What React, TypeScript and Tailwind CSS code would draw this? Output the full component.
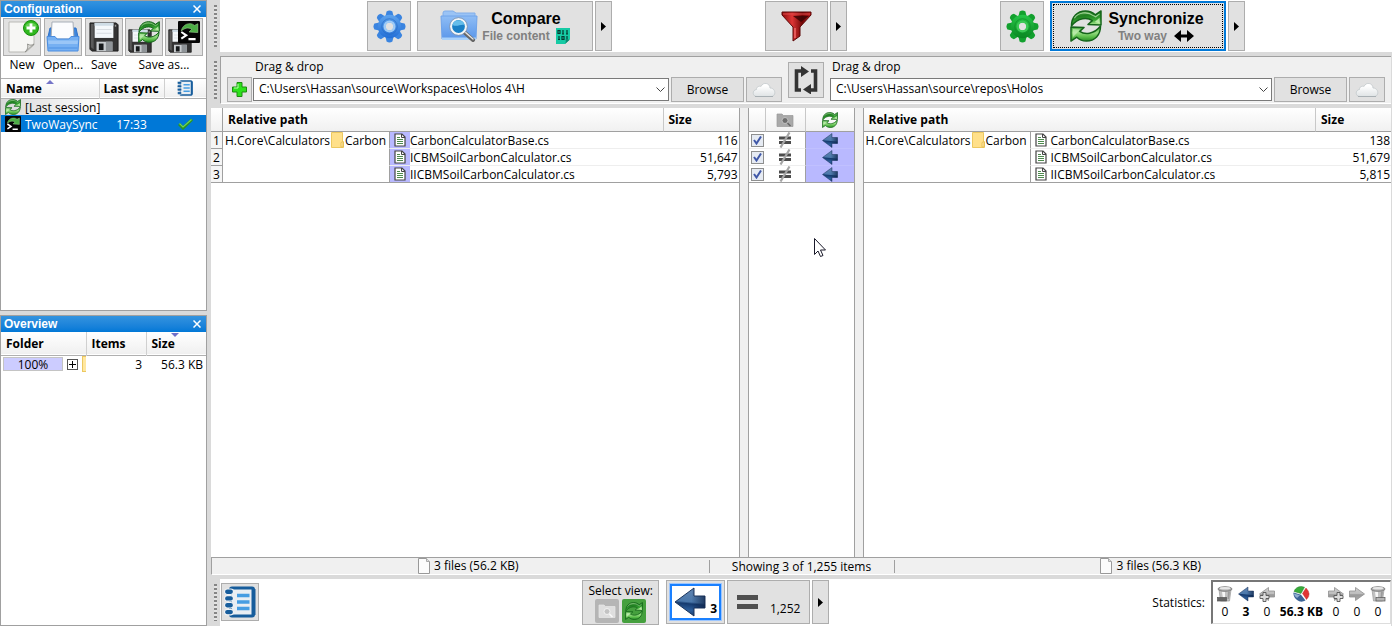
import React from "react";

type IconProps = { className?: string };

const syncHalf = "M1 16.500C1 7 7 1 15.500 1C19.500 1 23 2.500 25.500 5L31.500 1V15.500L18 15L22.500 11C17.500 7.500 8 7.500 1 16.500Z";

function SyncIcon({ className = "size-4" }: IconProps) {
  return (
    <svg className={className} viewBox="0 0 32 33" aria-hidden="true">
      <defs>
        <linearGradient id="syncTop" x1="0" y1="0" x2="0.3" y2="1">
          <stop offset="0" stopColor="#6cb85c" />
          <stop offset="0.4" stopColor="#1f7f20" />
          <stop offset="0.75" stopColor="#36a332" />
          <stop offset="1" stopColor="#9fe088" />
        </linearGradient>
        <linearGradient id="syncBottom" x1="0" y1="0" x2="0" y2="1">
          <stop offset="0" stopColor="#3da636" />
          <stop offset="0.45" stopColor="#93da80" />
          <stop offset="0.7" stopColor="#5fc04e" />
          <stop offset="1" stopColor="#278f26" />
        </linearGradient>
      </defs>
      <g strokeLinejoin="round" stroke="#14641a" strokeWidth="1.500">
        <path d={syncHalf} fill="url(#syncTop)" />
        <path
          d="M31 16.500C31 26 25 32 16.500 32C12.500 32 9 30.500 6.500 28L0.500 32V17.500L14 18L9.500 22C14.500 25.500 24 25.500 31 16.500Z"
          fill="url(#syncBottom)"
        />
      </g>
      <path d="M4 8.500C8 2.500 17 1 24 6L26 7L30 4" fill="none" stroke="#cdeec2" strokeWidth="1.100" opacity="0.7" />
      <path d="M25 12.500L30 8V14Z" fill="#c9f2b8" opacity="0.8" />
      <path d="M2.500 28V19.500L10 20Z" fill="#d2f5c4" opacity="0.6" />
    </svg>
  );
}

function CmdSyncIcon({ className = "size-4" }: IconProps) {
  return (
    <svg className={className} viewBox="0 0 20 20" aria-hidden="true">
      <rect width="20" height="20" rx="1" fill="#050505" />
      <path d="M3 9C4 3 11 0.500 15 4L18 2.500V10.500L10 10L12.500 7.500C9 5.500 6 6.500 3 9Z" fill="#4cae45" stroke="#a5dd9b" strokeWidth="0.5" />
      <path d="M3 10L7.500 13L3 16M9.500 16.500H16" fill="none" stroke="#fff" strokeWidth="1.900" />
    </svg>
  );
}

function FloppyShape() {
  return (
    <g>
      <path d="M1 1H29L31 3V31H3L1 29Z" fill="#343434" stroke="#1c1c1c" />
      <path d="M2 2H5V29L2 27Z" fill="#5a5a5a" />
      <path d="M6 1H26V17H6Z" fill="#f4f8fb" />
      <path d="M6 1H26V4H6Z" fill="#cfdde6" />
      <path d="M8 8H24M8 12H24" stroke="#d5dbe0" />
      <path d="M8 21H25V31H8Z" fill="#c9cdd0" />
      <path d="M18 21H25V31H18Z" fill="#8f9498" />
      <path d="M10.500 23H15.500V30H10.500Z" fill="#16191b" />
      <path d="M27.500 3H29V5H27.500Z" fill="#9b9b9b" />
    </g>
  );
}

function FloppyIcon() {
  return (
    <svg className="size-[30px]" viewBox="0 0 32 32" aria-hidden="true">
      <FloppyShape />
    </svg>
  );
}

function FloppyOverlay({ children }: { children: React.ReactNode }) {
  return (
    <span className="grid size-8">
      <svg className="col-start-1 row-start-1 size-6 self-end" viewBox="0 0 32 32" aria-hidden="true">
        <FloppyShape />
      </svg>
      <span className="z-10 col-start-1 row-start-1 justify-self-end">{children}</span>
    </span>
  );
}

function NewIcon() {
  return (
    <svg className="size-9" viewBox="0 0 36 36" aria-hidden="true">
      <path d="M5 3H30V26L22 33H5Z" fill="#f6f6f4" stroke="#b9b9b5" />
      <path d="M30 25L21 33C24 30 24 28 23.500 25C26 26.500 28 26.500 30 25Z" fill="#dcdcd8" stroke="#8d8d89" strokeWidth="0.9" />
      <circle cx="27" cy="9" r="7.500" fill="#2fb71e" stroke="#168c0c" />
      <path d="M21 7.500A6.500 6 0 0 1 33 7.500C29 9.500 25 9.500 21 7.500Z" fill="#78d965" opacity="0.7" />
      <path d="M27 4.500V13.500M22.500 9H31.500" stroke="#fff" strokeWidth="2.800" />
    </svg>
  );
}

function OpenIcon() {
  return (
    <svg className="size-9" viewBox="0 0 36 36" aria-hidden="true">
      <path d="M3 18L5 9H31L33 18V22H3Z" fill="#3e86dc" stroke="#2d70c8" />
      <path d="M7 3H28L29 20H6Z" fill="#fbfcfe" stroke="#a7aeb8" />
      <path d="M2 17.500H10L12 20H24L26 17.500H34L33 32H3Z" fill="#76b0f2" stroke="#4a8de0" />
      <path d="M3 21.500H33L32.500 25H3.500Z" fill="#a9d0fa" opacity="0.7" />
      <path d="M3.500 29H32.500" stroke="#4c91e4" />
    </svg>
  );
}

function LogIcon({ className = "size-4" }: IconProps) {
  return (
    <svg className={className} viewBox="0 0 32 32" aria-hidden="true">
      <rect x="6.500" y="2" width="23" height="28" rx="1.500" fill="#e9eef3" stroke="#175d9c" strokeWidth="3" />
      <path d="M29.500 3V29" stroke="#175d9c" strokeWidth="4" />
      <path d="M13 9.500H25.500M13 16H25.500M13 22.500H25.500" stroke="#469de2" strokeWidth="3.400" />
      <g fill="#175d9c" stroke="#eef1f4" strokeWidth="1.200">
        <rect x="0.500" y="3" width="9" height="5.500" rx="2.700" />
        <rect x="0.500" y="9.700" width="9" height="5.500" rx="2.700" />
        <rect x="0.500" y="16.500" width="9" height="5.500" rx="2.700" />
        <rect x="0.500" y="23.300" width="9" height="5.500" rx="2.700" />
      </g>
    </svg>
  );
}

const teeth = [0, 45, 90, 135, 180, 225, 270, 315];

function GearIcon({ color }: { color: "blue" | "green" }) {
  const blue = color === "blue";
  const id = blue ? "gearBlue" : "gearGreen";
  return (
    <svg className="size-[33px]" viewBox="0 0 34 34" aria-hidden="true">
      <defs>
        <linearGradient id={id} gradientUnits="userSpaceOnUse" x1="0" y1="0" x2="0" y2="34">
          <stop offset="0" stopColor={blue ? "#6aaef2" : "#2bd350"} />
          <stop offset="1" stopColor={blue ? "#1764d2" : "#047a1a"} />
        </linearGradient>
        <mask id={id + "Hole"}>
          <rect width="34" height="34" fill="#fff" />
          <circle cx="17" cy="17" r="4" fill="#000" />
        </mask>
      </defs>
      <g mask={"url(#" + id + "Hole)"}>
        <g fill={blue ? "#3a84e0" : "#12a02e"}>
          {teeth.map((a) => (
            <path key={a} d="M12.500 8L14 1.500Q17 -0.500 20 1.500L21.500 8Z" transform={"rotate(" + a + " 17 17)"} />
          ))}
        </g>
        <circle cx="17" cy="17" r="12" fill={"url(#" + id + ")"} />
      </g>
      <circle cx="17" cy="17" r="8" fill="none" stroke={blue ? "#2468c0" : "#0a8a22"} strokeWidth="1" opacity="0.6" />
      <circle cx="17" cy="17" r="5" fill="none" stroke={blue ? "#9fcbf6" : "#3cc956"} strokeWidth="2.500" />
    </svg>
  );
}

function CompareIcon() {
  return (
    <svg className="h-8 w-[38px]" viewBox="0 0 38 32" aria-hidden="true">
      <defs>
        <linearGradient id="folderG" x1="0" y1="0" x2="0" y2="1">
          <stop offset="0" stopColor="#8fbdf5" />
          <stop offset="1" stopColor="#5b97ea" />
        </linearGradient>
      </defs>
      <path d="M3 10V3Q3 1 5 1H13L16 3H35V10Z" fill="#9ac3f5" stroke="#80aeea" />
      <path d="M1 6H37L36 29H2Z" fill="url(#folderG)" stroke="#70a4ea" />
      <path d="M2 27.500H36V30H2Z" fill="#a9d1fa" />
      <path d="M24 22L33 30" stroke="#666" strokeWidth="4" strokeLinecap="round" />
      <path d="M25 22L33 29" stroke="#e4e4e4" strokeWidth="1.500" strokeLinecap="round" />
      <circle cx="18.500" cy="16.500" r="7.500" fill="#1a80c6" stroke="#f3f6f8" strokeWidth="2.200" />
      <circle cx="18.500" cy="16.500" r="8.900" fill="none" stroke="#8792a0" strokeWidth="0.7" />
      <path d="M12.500 15A6.200 6.200 0 0 1 24.500 15C21 13.500 17 17.500 12.500 15Z" fill="#65bdea" />
    </svg>
  );
}

function BinaryIcon() {
  return (
    <svg className="h-4 w-[14px]" viewBox="0 0 14 16" aria-hidden="true">
      <path d="M0 0H14V11L9 16H0Z" fill="#16caa4" />
      <path d="M9 16C10 14 10 13 9.500 11.500H14Z" fill="#0a8a70" />
      <path d="M2 2.500H4V5.500H2ZM7 2V6M11 2V6M6 6H8M10 6H12M3 8V11.500M2 11.500H4M6 8.500H8V11.500H6ZM11 8V11.500" fill="none" stroke="#06382f" strokeWidth="1.200" />
    </svg>
  );
}

function FunnelIcon() {
  return (
    <svg className="size-[31px]" viewBox="0 0 31 31" aria-hidden="true">
      <defs>
        <linearGradient id="funnelG" x1="0" y1="0" x2="1" y2="0">
          <stop offset="0" stopColor="#8b0a0a" />
          <stop offset="0.35" stopColor="#dd3535" />
          <stop offset="0.7" stopColor="#720606" />
          <stop offset="1" stopColor="#b51717" />
        </linearGradient>
      </defs>
      <path d="M1 1H30V4L19 16V25L12 30V16L1 4Z" fill="url(#funnelG)" stroke="#5d0909" />
      <path d="M2 3H29" stroke="#e24a4a" />
      <path d="M14 17V27" stroke="#f16a6a" strokeWidth="1.500" />
      <path d="M12 5H28L20 11Z" fill="#3c0303" opacity="0.85" />
    </svg>
  );
}

function SwapIcon() {
  return (
    <svg className="size-7" viewBox="0 0 28 28" aria-hidden="true">
      <path d="M9 5H4.500V24H9M19 5H23.500V24H18M8 5H11M17 24H20" fill="none" stroke="#333" strokeWidth="3.600" />
      <path d="M9 0L17 5.500L9 11ZM19 18L11 23.500L19 28.500Z" fill="#333" />
    </svg>
  );
}

function CloudIcon() {
  return (
    <svg className="h-4 w-6" viewBox="0 0 24 16" aria-hidden="true">
      <defs>
        <linearGradient id="cloudG" x1="0" y1="0" x2="0" y2="1">
          <stop offset="0.2" stopColor="#fff" />
          <stop offset="1" stopColor="#dfe3e5" />
        </linearGradient>
      </defs>
      <path d="M5 14.500C0 14.500 0 8 4.500 7.500C4 5 7.500 3.500 9 4.500C11 -0.500 18 1 18 6C24 6 24.500 14.500 19 14.500Z" fill="url(#cloudG)" stroke="#c3c9cc" strokeWidth="0.8" />
      <path d="M3 14.500H21" stroke="#a9b0b4" />
    </svg>
  );
}

function LeftArrow({ className = "size-4" }: IconProps) {
  return (
    <svg className={className} viewBox="0 0 32 30" aria-hidden="true">
      <defs>
        <linearGradient id="arrowBlue" x1="0.1" y1="0" x2="0" y2="1">
          <stop offset="0" stopColor="#5f83b0" />
          <stop offset="0.45" stopColor="#4b78ab" />
          <stop offset="0.52" stopColor="#163b6f" />
          <stop offset="0.75" stopColor="#2d5f9c" />
          <stop offset="1" stopColor="#163360" />
        </linearGradient>
        <linearGradient id="arrowShade" x1="0" y1="0" x2="1" y2="0">
          <stop offset="0.55" stopColor="#0f254a" stopOpacity="0" />
          <stop offset="1" stopColor="#0f254a" stopOpacity="0.75" />
        </linearGradient>
      </defs>
      <path d="M1 15L20 1V9H31V21H20V29Z" fill="url(#arrowBlue)" stroke="#1c355d" strokeLinejoin="round" />
      <path d="M1 15L20 1V9H31V21H20V29Z" fill="url(#arrowShade)" />
    </svg>
  );
}

function StatArrow({ right = false, plus = false }: { right?: boolean; plus?: boolean }) {
  return (
    <svg className="size-4" viewBox="0 0 16 16" aria-hidden="true">
      <defs>
        <linearGradient id="arrowGray" x1="0" y1="0" x2="0" y2="1">
          <stop offset="0" stopColor="#cfcfcf" />
          <stop offset="0.5" stopColor="#bdbdbd" />
          <stop offset="0.55" stopColor="#999" />
          <stop offset="1" stopColor="#ababab" />
        </linearGradient>
      </defs>
      <path
        d="M0.500 8L9.500 1.500V5H15.500V11H9.500V14.500Z"
        fill="url(#arrowGray)"
        stroke="#8f8f8f"
        strokeWidth="0.8"
        transform={right ? "matrix(-1 0 0 1 16 0)" : undefined}
      />
      {plus && (
        <path
          d="M4 6.500H7V9.500H10V12.500H7V15.500H4V12.500H1V9.500H4Z"
          fill="#ddd"
          stroke="#555"
          strokeWidth="0.9"
          transform={right ? "translate(5 0)" : undefined}
        />
      )}
    </svg>
  );
}

function TrashIcon({ right = false }: { right?: boolean }) {
  return (
    <svg className="size-4" viewBox="0 0 16 16" aria-hidden="true">
      <path d="M2 3.500H14L12.500 15H3.500Z" fill="#c2c2c2" stroke="#9b9b9b" strokeWidth="0.7" />
      <path d="M5 5.500H8L8 13H6Z" fill="#f7f7f7" />
      <path d="M11 5.500H13L12 13H10.500Z" fill="#9b9b9b" />
      <ellipse cx="8" cy="3" rx="7" ry="2.300" fill="#a8a8a8" stroke="#777" strokeWidth="0.8" />
      <ellipse cx="8" cy="2.300" rx="5.500" ry="1.200" fill="#e6e6e6" />
      <rect x={right ? 6 : 0.5} y="11.500" width="9" height="3.500" fill={right ? "#b5b5b5" : "#666"} stroke="#555" strokeWidth="0.7" />
    </svg>
  );
}

function PieIcon() {
  return (
    <svg className="h-4 w-[17px]" viewBox="0 0 17 16" aria-hidden="true">
      <path d="M8 7.500L1 5.500Q3 0.500 8.500 0.500L11.500 1.200Z" fill="#37ab3a" stroke="#237e26" strokeWidth="0.5" />
      <path d="M9.500 7.500L13 2Q19 8 13.500 13.500Z" fill="#e03434" stroke="#b11f1f" strokeWidth="0.4" />
      <path d="M0.500 6.500L8 8.700L12.500 14.500Q8 17 4 14Q0 11 0.500 6.500Z" fill="#3b6396" />
      <path d="M0.800 7.500L7 9.200L4 12Q1.500 11 0.800 7.500Z" fill="#8fadd0" />
    </svg>
  );
}

function FolderSearchIcon({ className = "h-4 w-[18px]", light = false }: IconProps & { light?: boolean }) {
  return (
    <svg className={className} viewBox="0 0 18 16" aria-hidden="true">
      <path d="M1 2H6L7.500 3.500H17V14.500H1Z" fill={light ? "#dedede" : "#a9a9a9"} stroke={light ? "#e8e8e8" : "#9a9a9a"} strokeWidth="0.7" />
      <circle cx="9" cy="8.500" r="3" fill={light ? "#c3c3c3" : "#6e6e6e"} stroke={light ? "#f5f5f5" : "#c6c6c6"} strokeWidth="0.9" />
      <path d="M11.500 11L14.500 14" stroke={light ? "#fafafa" : "#666"} strokeWidth="1.500" />
    </svg>
  );
}

function NotEqualIcon() {
  return (
    <svg className="mx-auto block size-4" viewBox="0 0 16 16" aria-hidden="true">
      <path d="M2 6H14M2 10.500H14" stroke="#4c4c4c" strokeWidth="3" />
      <path d="M3.500 15.500L12.500 0.500" stroke="#a5a5a5" strokeWidth="2.200" />
    </svg>
  );
}

function FileIcon() {
  return (
    <svg className="h-[14px] w-3" viewBox="0 0 12 14" aria-hidden="true">
      <path d="M1 1H8L11 4V13H1Z" fill="#fff" stroke="#444" strokeWidth="1.200" />
      <path d="M7.500 1V4.500H11" fill="none" stroke="#444" />
      <path d="M3 4.500H6M3 6.500H9M3 8.500H9M3 10.500H9" stroke="#4c8a4c" />
    </svg>
  );
}

function PageIcon() {
  return (
    <svg className="h-4 w-3" viewBox="0 0 12 16" aria-hidden="true">
      <path d="M0.500 0.500H8.500L11.500 3.500V15.500H0.500Z" fill="#fcfcfc" stroke="#999" />
      <path d="M8.500 0.500V3.500H11.500" fill="#e0e0e0" stroke="#aaa" />
    </svg>
  );
}

function FolderIcon() {
  return (
    <svg className="h-4 w-[13px] shrink-0" viewBox="0 0 13 16" aria-hidden="true">
      <path d="M0.500 0.500H11.500V9L12.500 10V15.500H0.500Z" fill="#ffe08a" stroke="#ecc860" />
      <path d="M10 15V10.500L12 9.500V15Z" fill="#ffeaa8" stroke="#e3ba4c" strokeWidth="0.8" />
    </svg>
  );
}

function Triangle() {
  return (
    <svg className="h-[9px] w-[5px]" viewBox="0 0 5 9" aria-hidden="true">
      <path d="M0 0L5 4.500L0 9Z" fill="#000" />
    </svg>
  );
}

const btn = "flex items-center justify-center border border-[#adadad] bg-[#e1e1e1]";
const headBg = "bg-gradient-to-b from-white to-[#f0f0f0]";
const cellText = "block h-4 leading-[18px] whitespace-nowrap";

function MenuArrow({ label, height = "h-[50px]" }: { label: string; height?: string }) {
  return (
    <button aria-label={label} className={`${btn} ${height} w-[17px]`}>
      <Triangle />
    </button>
  );
}

function Grip() {
  return (
    <div className="flex w-[9px] shrink-0 py-[5px] pl-[3px]">
      <div className="w-[3px] bg-[repeating-linear-gradient(#858585_0_2px,#e4e4e4_2px_4px)]" />
    </div>
  );
}

function PanelTitle({ children }: { children: string }) {
  return (
    <div className="flex h-4 items-center justify-between bg-gradient-to-b from-[#3393df] to-[#0078d7] pr-[5px] pl-[3px] text-white">
      <h2 className="font-['Liberation_Sans',sans-serif] text-xs font-bold">{children}</h2>
      <button aria-label={"Close " + children}>
        <svg className="size-2" viewBox="0 0 8 8" aria-hidden="true">
          <path d="M0.500 0.500L7.500 7.500M7.500 0.500L0.500 7.500" stroke="#fff" strokeWidth="1.500" />
        </svg>
      </button>
    </div>
  );
}

function ConfigButton({ label, children }: { label: string; children: React.ReactNode }) {
  return (
    <button aria-label={label} className={`${btn} size-[38px]`}>
      {children}
    </button>
  );
}

const configLabel = "leading-[18px] whitespace-nowrap";

function Sidebar() {
  return (
    <aside className="flex w-[207px] shrink-0 flex-col gap-1">
      <section className="flex h-[311px] flex-col border border-[#a0a0a0] bg-white">
        <PanelTitle>Configuration</PanelTitle>
        <div className="flex gap-[2px] border-b border-[#b0b0b0] px-[2px] pt-px pb-1">
          <div className="flex w-[38px] flex-col items-center">
            <ConfigButton label="New"><NewIcon /></ConfigButton>
            <span className={configLabel}>New</span>
          </div>
          <div className="flex w-10 flex-col items-center">
            <ConfigButton label="Open"><OpenIcon /></ConfigButton>
            <span className={configLabel}>Open...</span>
          </div>
          <div className="flex w-[38px] flex-col items-center">
            <ConfigButton label="Save"><FloppyIcon /></ConfigButton>
            <span className={configLabel}>Save</span>
          </div>
          <div className="flex flex-col items-center">
            <div className="flex gap-[2px]">
              <ConfigButton label="Save as">
                <FloppyOverlay><SyncIcon className="size-[22px]" /></FloppyOverlay>
              </ConfigButton>
              <ConfigButton label="Save as batch job">
                <FloppyOverlay><CmdSyncIcon className="size-[22px]" /></FloppyOverlay>
              </ConfigButton>
            </div>
            <span className={configLabel}>Save as...</span>
          </div>
        </div>
        <table className="w-full table-fixed border-collapse text-left">
          <colgroup>
            <col />
            <col className="w-[65px]" />
            <col className="w-[42px]" />
          </colgroup>
          <thead>
            <tr className={`h-[19px] border-b border-[#b0b0b0] ${headBg}`}>
              <th className="border-r border-[#d0d0d0] pl-[5px]">
                <span className="flex h-4 gap-1 leading-[18px]">
                  Name
                  <svg className="h-1 w-2" viewBox="0 0 8 4" aria-hidden="true">
                    <path d="M4 0L8 4H0Z" fill="#7575c8" />
                  </svg>
                </span>
              </th>
              <th className="border-r border-[#d0d0d0] pl-1"><span className={cellText}>Last sync</span></th>
              <th><LogIcon className="mx-auto size-4" /></th>
            </tr>
          </thead>
          <tbody>
            <tr className="h-[17px]">
              <td className="bg-gradient-to-r from-[#d8d8d8] to-white pl-1">
                <span className="flex items-center gap-1"><SyncIcon className="size-4 shrink-0" /><span className={cellText}>[Last session]</span></span>
              </td>
              <td />
              <td />
            </tr>
            <tr className="h-[17px] bg-[#0078d7] text-white">
              <td className="pl-1">
                <span className="flex items-center gap-1"><CmdSyncIcon className="size-4 shrink-0" /><span className={cellText}>TwoWaySync</span></span>
              </td>
              <td className="text-center"><span className={cellText}>17:33</span></td>
              <td>
                <svg className="mx-auto h-3 w-[15px]" viewBox="0 0 15 12" aria-hidden="true">
                  <path d="M1 6L5 10L14 1.500" fill="none" stroke="#2b9420" strokeWidth="3" />
                  <path d="M1.500 5.500L5 9L13.500 1.500" fill="none" stroke="#6fd35b" strokeWidth="1.200" />
                </svg>
              </td>
            </tr>
          </tbody>
        </table>
      </section>
      <section className="flex flex-1 flex-col border border-[#a0a0a0] bg-white">
        <PanelTitle>Overview</PanelTitle>
        <table className="w-full table-fixed border-collapse text-left">
          <colgroup>
            <col className="w-[85px]" />
            <col className="w-[60px]" />
            <col />
          </colgroup>
          <thead>
            <tr className={`h-[23px] border-b border-[#b0b0b0] ${headBg}`}>
              <th className="border-r border-[#d0d0d0] pl-[5px]"><span className={cellText}>Folder</span></th>
              <th className="border-r border-[#d0d0d0] pl-[5px]"><span className={cellText}>Items</span></th>
              <th className="pl-[5px]">
                <span className="flex h-5 pb-1 leading-[22px]">
                  Size
                  <svg className="-ml-1 h-1 w-2" viewBox="0 0 8 4" aria-hidden="true">
                    <path d="M0 0H8L4 4Z" fill="#6f6fc8" />
                  </svg>
                </span>
              </th>
            </tr>
          </thead>
          <tbody>
            <tr className="h-[18px]">
              <td className="pl-[2px]">
                <span className="flex items-center justify-between">
                  <span className="h-[14px] w-[60px] border border-[#c4c4c4] bg-[#ccccff] text-center leading-[14px]">100%</span>
                  <button aria-label="Expand" className="grid size-[11px] place-items-center border border-[#555] bg-white">
                    <svg className="size-[7px]" viewBox="0 0 7 7" aria-hidden="true">
                      <path d="M3.500 0V7M0 3.500H7" stroke="#000" />
                    </svg>
                  </button>
                  <span className="h-4 w-1 border border-r-0 border-[#ecc860] bg-[#ffe7a0]" />
                </span>
              </td>
              <td className="pr-1 text-right"><span className={cellText}>3</span></td>
              <td className="pr-[3px] text-right"><span className={cellText}>56.3 KB</span></td>
            </tr>
          </tbody>
        </table>
      </section>
    </aside>
  );
}

function ActionBar() {
  return (
    <div className="flex h-[52px]">
      <Grip />
      <div className="-mr-px flex flex-1 items-start justify-evenly gap-[6px] bg-white pt-px">
        <div className="flex">
          <button aria-label="Comparison settings" className={`${btn} mr-[6px] h-[50px] w-11`}><GearIcon color="blue" /></button>
          <button className={`${btn} mr-[2px] h-[50px] w-44 gap-1 font-['Liberation_Sans',sans-serif]`}>
            <CompareIcon />
            <span className="flex flex-col items-center pt-[2px] font-bold">
              <span className="text-base leading-[18px]">Compare</span>
              <span className="flex items-center gap-[6px] text-xs leading-4 text-[#808080]">File content<BinaryIcon /></span>
            </span>
          </button>
          <MenuArrow label="Comparison variants" />
        </div>
        <div className="flex gap-[2px]">
          <button aria-label="Filter" className={`${btn} h-[50px] w-[63px]`}><FunnelIcon /></button>
          <MenuArrow label="Filter options" />
        </div>
        <div className="flex">
          <button aria-label="Synchronization settings" className={`${btn} mr-[6px] h-[50px] w-11`}><GearIcon color="green" /></button>
          <button className="mr-[2px] h-[50px] w-44 border-2 border-[#0078d7] bg-[#e1e1e1] p-px font-['Liberation_Sans',sans-serif]">
            <span className="flex h-full items-center justify-center gap-[6px] border border-dotted border-black pr-[2px]">
              <SyncIcon className="size-8" />
              <span className="flex flex-col items-center pt-[2px] font-bold">
                <span className="text-base leading-[18px]">Synchronize</span>
                <span className="flex items-center gap-[7px] text-xs leading-4 text-[#808080]">
                  Two way
                  <svg className="h-3 w-5" viewBox="0 0 20 12" aria-hidden="true">
                    <path d="M0 6L7 0V4.500H13V0L20 6L13 12V7.500H7V12Z" fill="#000" />
                  </svg>
                </span>
              </span>
            </span>
          </button>
          <MenuArrow label="Synchronization variants" />
        </div>
      </div>
    </div>
  );
}

function PathPicker({ path, side, addable = false }: { path: string; side: string; addable?: boolean }) {
  const id = side + "-folder";
  return (
    <div className="flex min-w-0 flex-1 flex-col">
      <label htmlFor={id} className={`h-5 leading-5 ${addable ? "pl-7" : "pl-[2px]"}`}>Drag &amp; drop</label>
      <div className="flex items-center gap-[2px]">
        {addable && (
          <button aria-label="Add folder pair" className={`${btn} -mr-px size-[25px]`}>
            <svg className="size-[15px]" viewBox="0 0 15 15" aria-hidden="true">
              <path d="M5 0.500H10V5H14.500V10H10V14.500H5V10H0.500V5H5Z" fill="#2de01c" stroke="#1c8c10" />
              <path d="M6 2V6H2" fill="none" stroke="#b7ffab" />
            </svg>
          </button>
        )}
        <div className="grid min-w-0 flex-1">
          <select id={id} className="col-start-1 row-start-1 h-[23px] w-full appearance-none border border-[#7a7a7a] bg-white pb-[2px] pl-[5px]">
            <option>{path}</option>
          </select>
          <svg className="pointer-events-none col-start-1 row-start-1 mr-1 h-[5px] w-[9px] self-center justify-self-end" viewBox="0 0 9 5" aria-hidden="true">
            <path d="M0.500 0.500L4.500 4.500L8.500 0.500" fill="none" stroke="#444" />
          </svg>
        </div>
        <button className={`${btn} h-[25px] w-[73px]`}>Browse</button>
        <button aria-label="Cloud storage" className={`${btn} h-[25px] w-9`}><CloudIcon /></button>
      </div>
    </div>
  );
}

function PathBar() {
  return (
    <div className="flex h-12">
      <Grip />
      <div className="flex flex-1 items-start border-t border-b border-l border-t-[#a0a0a0] border-b-white border-l-[#a0a0a0] bg-[#f0f0f0] px-[6px]">
        <PathPicker side="left" addable path="C:\Users\Hassan\source\Workspaces\Holos 4\H" />
        <button aria-label="Swap sides" className={`${btn} mx-[6px] mt-[5px] size-9 shrink-0`}><SwapIcon /></button>
        <PathPicker side="right" path="C:\Users\Hassan\source\repos\Holos" />
      </div>
    </div>
  );
}

const files = [
  { name: "CarbonCalculatorBase.cs", left: "116", right: "138" },
  { name: "ICBMSoilCarbonCalculator.cs", left: "51,647", right: "51,679" },
  { name: "IICBMSoilCarbonCalculator.cs", left: "5,793", right: "5,815" },
];

function FileTable({ side }: { side: "left" | "right" }) {
  const left = side === "left";
  return (
    <div className={`min-w-0 flex-1 border-[#a0a0a0] bg-white ${left ? "border-r" : "border-l"}`}>
      <table className="w-full table-fixed border-separate border-spacing-0 text-left">
        <colgroup>
          {left && <col className="w-3" />}
          <col className="w-[167px]" />
          <col />
          <col className="w-[75px]" />
        </colgroup>
        <thead>
          <tr className={`h-6 ${headBg}`}>
            {left && <th aria-label="Row" className="border-r border-b border-[#a0a0a0]" />}
            <th colSpan={2} className="border-r border-b border-r-[#c8c8c8] border-b-[#a0a0a0] pl-[5px]">Relative path</th>
            <th className="border-b border-b-[#a0a0a0] pl-[5px]">Size</th>
          </tr>
        </thead>
        <tbody>
          {files.map((f, i) => (
            <tr key={f.name} className="h-[17px] [&:last-child>td]:border-b-[#a0a0a0]">
              {left && <td className="border-r border-b border-[#a0a0a0] bg-[#f5f5f5] text-center"><span className={cellText}>{i + 1}</span></td>}
              <td className="border-r border-b border-r-[#a0a0a0] border-b-white pl-[2px]">
                {i === 0 && (
                  <span className="flex h-4 items-center gap-px">
                    <span className={cellText}>H.Core\Calculators</span>
                    <FolderIcon />
                    <span className={cellText}>Carbon</span>
                  </span>
                )}
              </td>
              <td className="border-b border-[#eee]">
                <span className="flex items-center">
                  <span className={`flex h-4 w-5 shrink-0 items-center justify-center ${left ? "bg-[#b9b9ff]" : ""}`}><FileIcon /></span>
                  <span className={cellText}>{f.name}</span>
                </span>
              </td>
              <td className="border-b border-[#eee] pr-px text-right"><span className={cellText}>{left ? f.left : f.right}</span></td>
            </tr>
          ))}
        </tbody>
      </table>
    </div>
  );
}

function ActionTable() {
  return (
    <div className="w-[123px] shrink-0 border-x-8 border-[#f0f0f0] bg-white">
      <div className="h-full border-x border-[#a0a0a0]">
        <table className="w-full table-fixed border-separate border-spacing-0">
          <colgroup>
            <col className="w-[17px]" />
            <col className="w-10" />
            <col />
          </colgroup>
          <thead>
            <tr className={`h-6 ${headBg}`}>
              <th aria-label="Selected" className="border-r border-b border-r-[#c8c8c8] border-b-[#a0a0a0]" />
              <th aria-label="Difference" className="border-r border-b border-r-[#c8c8c8] border-b-[#a0a0a0]"><FolderSearchIcon className="mx-auto h-4 w-[18px]" /></th>
              <th aria-label="Action" className="border-b border-b-[#a0a0a0]"><SyncIcon className="mx-auto size-4" /></th>
            </tr>
          </thead>
          <tbody>
            {files.map((f) => (
              <tr key={f.name} className="h-[17px] [&:last-child>td]:border-b-[#a0a0a0]">
                <td className="border-b border-[#eee]">
                  <label className="ml-[2px] grid size-[13px] place-items-center">
                    <input type="checkbox" defaultChecked aria-label={f.name} className="peer col-start-1 row-start-1 size-[13px] appearance-none border border-[#8e8f8f] bg-[#e6ebf3]" />
                    <svg className="pointer-events-none invisible col-start-1 row-start-1 size-[9px] peer-checked:visible" viewBox="0 0 9 9" aria-hidden="true">
                      <path d="M1 4L3.500 7.500L8 0.500" fill="none" stroke="#4058a8" strokeWidth="2" />
                    </svg>
                  </label>
                </td>
                <td className="border-r border-b border-r-[#a0a0a0] border-b-[#eee]"><NotEqualIcon /></td>
                <td className="border-b border-[#c0c0ff] bg-[#b9b9ff]"><LeftArrow className="mx-auto h-[15px] w-4" /></td>
              </tr>
            ))}
          </tbody>
        </table>
      </div>
    </div>
  );
}

function StatusBar() {
  return (
    <div className="flex h-[18px] items-center border-t border-b border-l border-t-[#a0a0a0] border-b-white border-l-[#a0a0a0] bg-[#f0f0f0]">
      <div className="flex flex-1 items-center justify-center gap-1 pl-4"><PageIcon />3 files (56.2 KB)</div>
      <div className="w-[186px] border-x border-[#a0a0a0] text-center leading-[13px]">Showing 3 of 1,255 items</div>
      <div className="flex flex-1 items-center justify-center gap-1 pl-4"><PageIcon />3 files (56.3 KB)</div>
    </div>
  );
}

const stats = [
  { key: "Delete left", icon: <TrashIcon />, value: "0" },
  { key: "Update left", icon: <LeftArrow />, value: "3", bold: true },
  { key: "Create left", icon: <StatArrow plus />, value: "0" },
  { key: "Data", icon: <PieIcon />, value: "56.3 KB", bold: true },
  { key: "Create right", icon: <StatArrow right plus />, value: "0" },
  { key: "Update right", icon: <StatArrow right />, value: "0" },
  { key: "Delete right", icon: <TrashIcon right />, value: "0" },
];

function ViewBar() {
  return (
    <div className="flex h-[47px]">
      <Grip />
      <div className="flex flex-1 items-start justify-between bg-white pt-px pl-px">
        <button aria-label="Show log" className={`${btn} mt-[3px] size-[38px]`}><LogIcon className="size-8" /></button>
        <div className="flex items-start">
          <div className="mr-[7px] flex h-[45px] w-[77px] flex-col items-center border border-[#adadad] bg-[#e1e1e1]">
            <span className="h-[18px] leading-5">Select view:</span>
            <div className="flex gap-[3px]">
              <button aria-label="Category view" className="grid size-6 place-items-center rounded-xs bg-[#b5b5b5]"><FolderSearchIcon light /></button>
              <button aria-label="Action view" className="grid size-6 place-items-center rounded-xs bg-[#45a03e]"><SyncIcon className="size-[18px]" /></button>
            </div>
          </div>
          <button className={`${btn} mr-[2px] h-11 w-[59px]`}>
            <span className="flex h-[38px] w-[53px] items-center justify-center gap-1 border border-[#9cc6ff] bg-white outline-2 -outline-offset-3 outline-[#1a80ff]">
              <LeftArrow className="h-[30px] w-8" />
              <span className="self-end pb-[3px] font-bold">3</span>
            </span>
          </button>
          <button className={`${btn} mr-[2px] h-11 w-[83px] gap-3`}>
            <svg className="h-[14px] w-[21px]" viewBox="0 0 21 14" aria-hidden="true">
              <path d="M0 2.500H21M0 11.500H21" stroke="#505050" strokeWidth="5" />
            </svg>
            <span className="self-end pb-[6px]">1,252</span>
          </button>
          <MenuArrow label="More categories" height="h-11" />
        </div>
        <div className="flex items-center gap-[6px]">
          <span className="pt-[2px]">Statistics:</span>
          <dl className="flex h-11 items-start gap-[5px] border-t-2 border-r border-b border-l-2 border-t-[#777] border-r-[#ddd] border-b-[#ddd] border-l-[#777] bg-white px-1 pt-1">
            {stats.map((s) => (
              <div key={s.key} className="flex min-w-4 flex-col items-center gap-[2px]">
                <dt aria-label={s.key}>{s.icon}</dt>
                <dd className={s.bold ? "font-bold" : ""}>{s.value}</dd>
              </div>
            ))}
          </dl>
        </div>
      </div>
    </div>
  );
}

function Cursor() {
  return (
    <svg className="pointer-events-none absolute top-[238px] left-[814px] h-5 w-3" viewBox="0 0 12 20" aria-hidden="true">
      <path d="M0.500 0.500V16.500L4 13L6.500 18.500L9 17.500L6.500 12H11.500Z" fill="#fff" stroke="#1a1a2a" />
    </svg>
  );
}

export default function App() {
  return (
    <div className="relative flex min-h-screen gap-1 bg-[#dadada] font-['Open_Sans','Noto_Sans',sans-serif] text-xs leading-4 text-black">
      <Sidebar />
      <main className="flex min-w-0 flex-1 flex-col pr-px">
        <ActionBar />
        <div className="mt-1"><PathBar /></div>
        <div className="mt-1 flex flex-1">
          <FileTable side="left" />
          <ActionTable />
          <FileTable side="right" />
        </div>
        <StatusBar />
        <div className="mt-1"><ViewBar /></div>
      </main>
      <Cursor />
    </div>
  );
}
